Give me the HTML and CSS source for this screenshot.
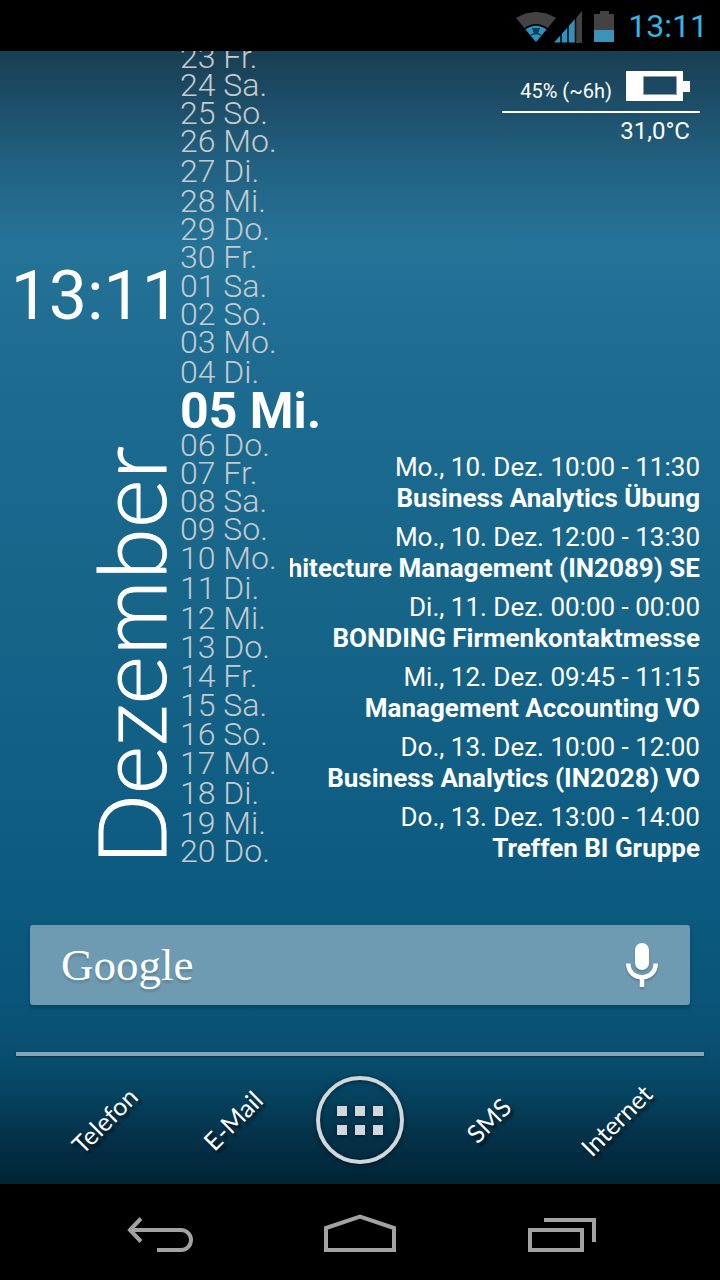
FILE: index.html
```html
<!DOCTYPE html>
<html lang="de">
<head>
  <meta charset="UTF-8" />
  <meta name="viewport" content="width=device-width, initial-scale=1.0"/>
  <title>Homescreen</title>
  <link rel="stylesheet" href="styles.css">
</head>
<body>
  <header class="statusbar">
    <svg class="status-wifi" width="40" height="34" viewBox="0 0 40 34">
      <path fill="#434343" d="M20 33 0 9Q20 -3 40 9Z"/>
      <path fill="#000" d="M20 33 8.500 19Q20 11 31.500 19Z"/>
      <path fill="#2d93bd" d="M20 33 9.500 20.500Q20 13 30.500 20.500Z"/>
      <path fill="none" stroke="#0d4258" stroke-width="1.500" d="M14.500 26.500Q20 22.500 25.500 26.500"/>
      <path fill="#0d4258" d="M16 19h8l-2 6h-4z"/>
    </svg>
    <svg class="status-signal" width="28" height="34" viewBox="0 0 28 34">
      <path fill="#434343" d="M22 9 28 2V34H22Z"/>
      <path fill="#2d93bd" d="M0 33.500 21 10V33.500Z"/>
      <path stroke="#000" stroke-width="1.500" d="M7 20V34M14 12V34M21.500 6V34"/>
    </svg>
    <svg class="status-battery" width="20" height="34" viewBox="0 0 20 34">
      <path fill="#434343" d="M6 2h9v3h5v16H0V5h6z"/>
      <path fill="#3a94b8" d="M0 21h20v12H0z"/>
    </svg>
    <time class="status-time">13:11</time>
  </header>

  <main class="home">
    <div class="widgets">
      <section class="left">
        <time class="clock">13:11</time>
        <div class="month">Dezember</div>
      </section>

      <ol class="days">
        <li>23 Fr.</li>
        <li>24 Sa.</li>
        <li>25 So.</li>
        <li>26 Mo.</li>
        <li class="high">27 Di.</li>
        <li class="high">28 Mi.</li>
        <li>29 Do.</li>
        <li>30 Fr.</li>
        <li class="mid">01 Sa.</li>
        <li>02 So.</li>
        <li>03 Mo.</li>
        <li class="high">04 Di.</li>
        <li class="today">05 Mi.</li>
        <li>06 Do.</li>
        <li>07 Fr.</li>
        <li>08 Sa.</li>
        <li>09 So.</li>
        <li class="mid">10 Mo.</li>
        <li class="high">11 Di.</li>
        <li class="high">12 Mi.</li>
        <li class="mid">13 Do.</li>
        <li class="mid">14 Fr.</li>
        <li class="mid">15 Sa.</li>
        <li class="mid">16 So.</li>
        <li class="mid">17 Mo.</li>
        <li class="high">18 Di.</li>
        <li class="high">19 Mi.</li>
        <li>20 Do.</li>
      </ol>

      <section class="right">
        <div class="battery">
          <div class="battery-row">
            <span class="battery-level">45% (~6h)</span>
            <svg width="64" height="30" viewBox="0 0 64 30">
              <path fill="#fff" fill-rule="evenodd" d="M0 0h57v10h7v11h-7v9H0zM18 6v18h33V6z"/>
              <path fill="none" stroke="#8ba0ac" d="M17.500 5.500h33v18h-33z"/>
            </svg>
          </div>
          <div class="battery-temp">31,0°C</div>
        </div>

        <ul class="agenda">
          <li>
            <time>Mo., 10. Dez. 10:00 - 11:30</time>
            <strong>Business Analytics Übung</strong>
          </li>
          <li>
            <time>Mo., 10. Dez. 12:00 - 13:30</time>
            <strong>hitecture Management (IN2089) SE</strong>
          </li>
          <li>
            <time>Di., 11. Dez. 00:00 - 00:00</time>
            <strong>BONDING Firmenkontaktmesse</strong>
          </li>
          <li>
            <time>Mi., 12. Dez. 09:45 - 11:15</time>
            <strong>Management Accounting VO</strong>
          </li>
          <li>
            <time>Do., 13. Dez. 10:00 - 12:00</time>
            <strong>Business Analytics (IN2028) VO</strong>
          </li>
          <li>
            <time>Do., 13. Dez. 13:00 - 14:00</time>
            <strong>Treffen BI Gruppe</strong>
          </li>
        </ul>
      </section>
    </div>

    <div class="search">
      <button class="search-google" type="button">Google</button>
      <button class="search-mic" type="button" aria-label="Sprachsuche">
        <svg width="32" height="46" viewBox="0 0 32 46">
          <rect x="9" y="1" width="14" height="27" rx="7" fill="#fff"/>
          <path fill="none" stroke="#fff" stroke-width="4.500" d="M2.300 21.500C2.300 40 29.700 40 29.700 21.500M16 36v9"/>
        </svg>
      </button>
    </div>

    <hr class="divider">

    <nav class="dock">
      <a href="#telefon"><span>Telefon</span></a>
      <a href="#email"><span>E-Mail</span></a>
      <button class="apps" type="button" aria-label="Apps">
        <svg width="88" height="88" viewBox="0 0 88 88">
          <circle cx="44" cy="44" r="42" fill="none" stroke="#d0d8dc" stroke-width="4"/>
          <path fill="#d0d8dc" d="M21 30h10v10H21zM39 30h10v10H39zM57 30h10v10H57zM21 49h10v10H21zM39 49h10v10H39zM57 49h10v10H57z"/>
        </svg>
      </button>
      <a href="#sms"><span>SMS</span></a>
      <a href="#internet"><span>Internet</span></a>
    </nav>
  </main>

  <footer class="navbar">
    <button type="button" aria-label="Zurück">
      <svg width="80" height="48" viewBox="0 0 80 48">
        <path d="M21 10.500 10 22 21 33.500M10 22H61a10 10 0 0 1 0 20H37"/>
      </svg>
    </button>
    <button type="button" aria-label="Startseite">
      <svg width="80" height="48" viewBox="0 0 80 48">
        <path d="M6 42V20L40 8.500 74 20V42Z"/>
      </svg>
    </button>
    <button type="button" aria-label="Letzte Apps">
      <svg width="80" height="48" viewBox="0 0 80 48">
        <path d="M10 22h52v20H10zM24 12H74V34"/>
      </svg>
    </button>
  </footer>
</body>
</html>
```
FILE: styles.css
```css
* {
  box-sizing: border-box;
}
body {
  margin: 0;
  min-height: 100vh;
  display: flex;
  flex-direction: column;
  background: #000;
  color: #fff;
  font-family: Roboto, sans-serif;
}
button {
  padding: 0;
  border: none;
  background: none;
  color: inherit;
  cursor: pointer;
}
svg {
  display: block;
}
ol, ul {
  margin: 0;
  padding: 0;
  list-style: none;
}

/* status bar */
.statusbar {
  height: 51px;
  padding: 0 12px 0 0;
  display: flex;
  justify-content: flex-end;
  align-items: center;
}
.status-wifi {
  margin-right: -2px;
}
.status-battery {
  margin: 0 14px 0 12px;
}
.status-time {
  font-size: 32px;
  line-height: 40px;
  color: #33b5e5;
}

/* home screen */
.home {
  flex: 1;
  display: flex;
  flex-direction: column;
  overflow: hidden;
  background: linear-gradient(#193e52 0, #1d4d67 50px, #226080 110px, #257397 190px, #1f6c92 300px, #18658a 540px, #0d5b80 820px, #0a567b 930px, #094f72 1000px, #054461 1040px, #043047 1090px, #022435 1133px);
}
.widgets {
  display: grid;
  grid-template-columns: 180px 110px 1fr;
}
.left {
  display: flex;
  flex-direction: column;
  justify-content: space-between;
  align-items: flex-end;
  padding-top: 205px;
}
.clock {
  font-size: 68px;
  line-height: 80px;
}
.month {
  padding-left: 4px;
  writing-mode: vertical-rl;
  transform: rotate(180deg);
  font-family: Lato, sans-serif;
  font-weight: 300;
  font-size: 94px;
  line-height: 92px;
  -webkit-text-stroke: 1px #fff;
}

.days {
  margin-top: -8px;
  font-size: 32px;
  font-weight: 300;
  line-height: 28px;
  color: #c6cbce;
  white-space: nowrap;
}
.days .mid {
  padding-top: 1px;
}
.days .high {
  padding-top: 2px;
}
.days .today {
  height: 45px;
  font-size: 50px;
  font-weight: 700;
  line-height: 51px;
  color: #fff;
}

.right {
  min-width: 0;
  padding: 20px 20px 1px 0;
  display: flex;
  flex-direction: column;
  justify-content: space-between;
}
.battery {
  align-self: flex-end;
  width: 198px;
  text-align: right;
}
.battery-row {
  display: flex;
  justify-content: flex-end;
  align-items: flex-end;
  gap: 14px;
  padding: 0 10px 10px 0;
  border-bottom: 2px solid #fff;
}
.battery-level {
  font-size: 20px;
  line-height: 20px;
}
.battery-temp {
  padding: 4px 10px 0 0;
  font-size: 24px;
  line-height: 28px;
}
.agenda {
  display: flex;
  flex-direction: column;
  gap: 8px;
  font-size: 26px;
  line-height: 31px;
}
.agenda li {
  display: flex;
  flex-direction: column;
  align-items: flex-end;
  overflow: hidden;
  white-space: nowrap;
}

/* search bar */
.search {
  height: 80px;
  margin: 60px 30px 0;
  display: flex;
  justify-content: space-between;
  align-items: center;
  border-radius: 3px;
  background: #6f9bb2;
  box-shadow: 0 3px 4px rgba(0,0,0,0.2);
}
.search-google {
  flex: 1;
  padding-left: 31px;
  text-align: left;
  font-family: "Liberation Serif", serif;
  font-size: 45px;
  line-height: 74px;
  text-shadow: 0 3px 2px rgba(0,0,0,0.15);
}
.search-mic {
  padding: 0 32px;
  filter: drop-shadow(0 2px 1px rgba(0,0,0,0.2));
}

.divider {
  width: auto;
  height: 4px;
  margin: 47px 16px 0;
  border: none;
  background: #83a6b6;
  box-shadow: 0 1px 2px rgba(0,0,0,0.4);
}

/* dock */
.dock {
  height: 128px;
  padding: 0 40px;
  display: grid;
  grid-template-columns: repeat(5, 1fr);
  align-items: center;
  justify-items: center;
}
.dock a {
  color: #fff;
  text-decoration: none;
  font-family: Lato, sans-serif;
  font-size: 25px;
  line-height: 32px;
  transform: rotate(-45deg);
  text-shadow: 0 4px 3px rgba(0,0,0,0.6);
}
.apps {
  filter: drop-shadow(0 1px 2px rgba(0,0,0,0.5));
}

/* navigation bar */
.navbar {
  height: 96px;
  padding: 0 60px;
  display: grid;
  grid-template-columns: repeat(3, 1fr);
  align-items: center;
  justify-items: center;
}
.navbar path {
  fill: none;
  stroke: #a2a2a2;
  stroke-width: 4;
}
```
